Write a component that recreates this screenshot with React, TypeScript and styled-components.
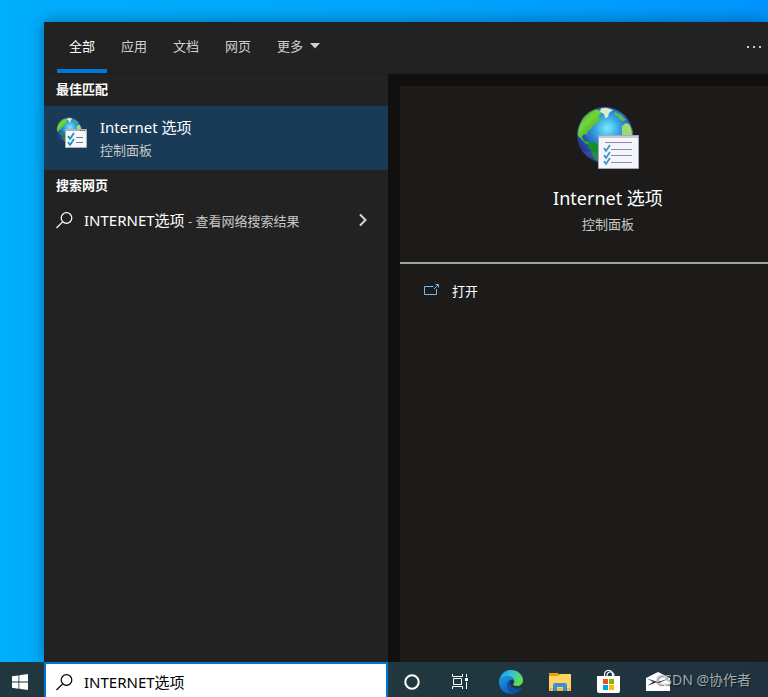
import React from 'react';
import styled, { createGlobalStyle } from 'styled-components';

const GlobalStyle = createGlobalStyle`
  *, *::before, *::after { box-sizing: border-box; }
  body {
    margin: 0;
    font-family: "Noto Sans", "Noto Sans CJK SC", sans-serif;
    font-size: 13px;
    line-height: 20px;
  }
  button, input { font: inherit; color: inherit; }
  button { border: 0; padding: 0; background: none; cursor: default; }
  h2, h3, p { margin: 0; }
  svg { display: block; flex: none; }
`;

const Desktop = styled.div`
  position: relative;
  display: flex;
  flex-direction: column;
  height: 100vh;
  overflow: hidden;
  background: linear-gradient(90deg, #00aefc 0%, #00a6fb 50%, #0094fc 100%);
`;

const SearchPanel = styled.main`
  flex: 1;
  min-height: 0;
  display: flex;
  flex-direction: column;
  margin: 22px 0 0 44px;
  background: #222222;
  color: #ffffff;
  box-shadow: 0 0 14px rgba(0, 20, 50, 0.45);
`;

const Header = styled.header`
  display: flex;
  align-items: center;
  justify-content: space-between;
  height: 52px;
  padding: 0 6px 0 13px;
  border-bottom: 1px solid #1d1d1d;
`;

const Tabs = styled.nav`
  display: flex;
  gap: 2px;
  height: 100%;
`;

const Tab = styled.button<{ $active?: boolean }>`
  display: flex;
  align-items: center;
  gap: 7px;
  padding: 0 12px;
  border-bottom: 4px solid ${(p) => (p.$active ? '#0078d7' : 'transparent')};
  color: ${(p) => (p.$active ? '#ffffff' : '#d0d0d0')};
`;

const MoreButton = styled.button`
  display: flex;
  align-items: center;
  height: 32px;
  margin-bottom: 2px;
`;

const Columns = styled.div`
  flex: 1;
  min-height: 0;
  display: flex;
`;

const Results = styled.section`
  flex: 0 0 344px;
`;

const GroupTitle = styled.h3`
  padding: 5px 12px 7px;
  font-size: 13px;
  font-weight: 700;
`;

const BestMatch = styled.button`
  display: flex;
  align-items: flex-start;
  gap: 12px;
  width: 100%;
  height: 64px;
  padding: 11px 12px;
  background: #193b57;
  text-align: left;
`;

const ResultText = styled.span`
  display: flex;
  flex-direction: column;
  gap: 3px;
`;

const Name = styled.span`
  font-size: 15px;
`;

const Muted = styled.span`
  font-size: 13px;
  color: #c8c8c8;
`;

const WebResult = styled.button`
  display: flex;
  align-items: center;
  width: 100%;
  height: 36px;
  padding: 0 20px 0 12px;
  gap: 11px;
  text-align: left;
`;

const WebResultText = styled.span`
  flex: 1;
`;

const PreviewArea = styled.section`
  flex: 1;
  min-width: 0;
  display: flex;
  padding: 12px 0 0 12px;
  overflow: hidden;
  background: #11100e;
`;

const PreviewCard = styled.div`
  flex: 1 0 416px;
  background: #1c1b19;
`;

const Hero = styled.div`
  display: flex;
  flex-direction: column;
  align-items: center;
  padding: 20px 0 28px;
  border-bottom: 2px solid #a3a3a1;
`;

const HeroTitle = styled.h2`
  margin: 14px 0 2px;
  font-size: 18px;
  font-weight: 400;
  line-height: 28px;
`;

const OpenAction = styled.button`
  display: flex;
  align-items: center;
  gap: 12px;
  width: 100%;
  height: 38px;
  margin-top: 8px;
  padding: 0 24px;
`;

const Taskbar = styled.footer`
  display: flex;
  align-items: center;
  height: 35px;
  background: linear-gradient(90deg, #20373f 0%, #21383f 50%, #20323f 100%);
  color: #ffffff;
`;

const TaskButton = styled.button<{ $width?: number }>`
  flex: none;
  display: flex;
  justify-content: center;
  align-items: center;
  width: ${(p) => p.$width ?? 48}px;
  height: 100%;
  padding-top: 5px;
`;

const PinnedApps = styled.div`
  display: flex;
  gap: 1px;
  height: 100%;
  margin-left: 3px;
`;

const SearchBox = styled.label`
  flex: 0 0 344px;
  display: flex;
  align-items: center;
  gap: 11px;
  height: 100%;
  margin-left: 4px;
  padding: 3px 10px 0;
  border: 2px solid #0078d7;
  border-bottom: 0;
  background: #ffffff;
  color: #000000;
`;

const SearchInput = styled.input`
  flex: 1;
  min-width: 0;
  padding: 0;
  border: 0;
  outline: 0;
  background: none;
  font-size: 15px;
`;

const Watermark = styled.span`
  position: absolute;
  right: 17px;
  bottom: 7px;
  font-size: 14px;
  color: rgba(190, 194, 197, 0.85);
  text-shadow: 1px 1px 1px rgba(0, 0, 0, 0.5);
  pointer-events: none;
`;

const Globe = ({ id }: { id: string }) => (
  <>
    <defs>
      <radialGradient id={`${id}-sea`} cx="54%" cy="38%" r="58%">
        <stop offset="0" stopColor="#7deafc" />
        <stop offset="0.35" stopColor="#38a8e6" />
        <stop offset="0.75" stopColor="#2556b4" />
        <stop offset="1" stopColor="#23358c" />
      </radialGradient>
      <linearGradient id={`${id}-land`} x1="0" y1="0" x2="0.6" y2="1">
        <stop offset="0" stopColor="#2a9e2e" />
        <stop offset="0.45" stopColor="#74d63a" />
        <stop offset="1" stopColor="#1f9c25" />
      </linearGradient>
      <clipPath id={`${id}-clip`}>
        <circle cx="29" cy="29" r="28" />
      </clipPath>
    </defs>
    <circle cx="29" cy="29" r="28" fill={`url(#${id}-sea)`} />
    <g clipPath={`url(#${id}-clip)`}>
      <path
        d="M3 20 7 11 14 5 20 3l4 2 1 3-3 3 3 2-3 4-4 2-3 4-3 2-1 4-3-1-2 3 2 4 5 1 2 3-5-1-5-5-4-4z"
        fill={`url(#${id}-land)`}
      />
      <path d="m13 37 5-1 5 3 3 3v14l-4 1-5-6-2-6-3-4z" fill="#168f28" />
      <path d="m46 20 4-3 3 1 3 5 2 6-1 6-4-2-2 1-5-5z" fill="#a2d970" />
      <path d="m39 6 6 3 5 5-3 1-4-2-1-3-4-1z" fill="#5ec04c" />
      <path d="m25 2 5-1 4 2 3 1-4 3-1 4-3 1-1-4-4-2z" fill="#d8edcc" />
      <path d="M0 43q15 5 30 2v14H0z" fill="#6b78d0" opacity="0.25" />
    </g>
    <circle cx="29" cy="29" r="27.5" fill="none" stroke="#203d73" strokeOpacity="0.7" />
  </>
);

const InternetOptionsLarge = () => (
  <svg width="64" height="64" viewBox="0 0 64 64" aria-hidden="true">
    <Globe id="large" />
    <path d="M22.500 29.500h40v33h-40z" fill="#f5f6fa" stroke="#9eabbd" />
    <path d="M23 31h39" stroke="#c2cad7" strokeWidth="2" />
    <path d="M29 36.500h27M35 43.500h21M35 49.500h21M35 56.500h21" stroke="#8e89aa" />
    <path
      d="m28 42 2 3 4-6m-6 10 2 3 4-6m-6 9 2 3 4-6"
      fill="none"
      stroke="#3b92c8"
      strokeWidth="1.700"
    />
  </svg>
);

const InternetOptionsSmall = () => (
  <svg width="32" height="32" viewBox="0 0 32 32" aria-hidden="true">
    <g transform="scale(0.450)">
      <Globe id="small" />
    </g>
    <path d="M9.500 12.500h21v18h-21z" fill="#f8f8f8" stroke="#a9b1b8" />
    <path d="M10 13.500h20" stroke="#a9b1b8" />
    <path d="M24 13.500h1m1 0h1m1 0h1" stroke="#52606b" />
    <path d="M20 20.500h7M20 25.500h7" stroke="#77749c" />
    <path d="m12 19 2 3 4-6m-6 9 2 3 4-6" fill="none" stroke="#1594bd" strokeWidth="1.800" />
  </svg>
);

const SearchIcon = () => (
  <svg width="17" height="17" viewBox="0 0 17 17" fill="none" stroke="currentColor" aria-hidden="true">
    <circle cx="10.500" cy="6" r="5.300" strokeWidth="1.200" />
    <path d="M6.600 9.800.5 16" strokeWidth="1.200" />
  </svg>
);

const CaretDown = () => (
  <svg width="10" height="6" viewBox="0 0 10 6" aria-hidden="true">
    <path d="M0 0h10L5 5.500z" fill="#d0d0d0" />
  </svg>
);

const Dots = () => (
  <svg width="16" height="4" viewBox="0 0 16 4" aria-hidden="true">
    <path d="M1 1h2v2H1zM7 1h2v2H7zM13 1h2v2h-2z" fill="#cccccc" />
  </svg>
);

const ChevronRight = () => (
  <svg width="10" height="14" viewBox="0 0 10 14" fill="none" aria-hidden="true">
    <path d="m2 1.500 5.500 5.500L2 12.500" stroke="#d6d6d6" strokeWidth="2" />
  </svg>
);

const OpenIcon = () => (
  <svg width="16" height="16" viewBox="0 0 16 16" fill="none" stroke="#76b9ed" aria-hidden="true">
    <path d="M9.500 3.500h-9v8h12V6M10 6l4.500-4.500M11.500 1.500h3v3" />
  </svg>
);

const WindowsIcon = () => (
  <svg width="16" height="16" viewBox="0 0 16 16" fill="#ffffff" aria-hidden="true">
    <path d="M0 2.300 6.500 1.400v6.200H0zM7.300 1.300 16 0v7.600H7.300zM0 8.500h6.500v6.200L0 13.800zM7.300 8.500H16V16l-8.700-1.200z" />
  </svg>
);

const CortanaIcon = () => (
  <svg width="16" height="16" viewBox="0 0 16 16" fill="none" aria-hidden="true">
    <circle cx="8" cy="8" r="6.700" stroke="#ffffff" strokeWidth="2" />
  </svg>
);

const TaskViewIcon = () => (
  <svg width="17" height="16" viewBox="0 0 17 16" fill="none" stroke="#ffffff" aria-hidden="true">
    <path d="M.5 0v2.500h10V0M1.500 4.500h8v6h-8zM.5 15v-2.500h10V15M14.500 0v3M14.500 8v7" />
    <path d="M13 4h3v3h-3z" fill="#ffffff" stroke="none" />
  </svg>
);

const EdgeIcon = () => (
  <svg width="24" height="24" viewBox="0 0 24 24" aria-hidden="true">
    <defs>
      <linearGradient id="edge-top" x1="0" y1="0" x2="1" y2="0.5">
        <stop offset="0" stopColor="#168de0" />
        <stop offset="0.5" stopColor="#35c2d9" />
        <stop offset="1" stopColor="#62dc54" />
      </linearGradient>
      <linearGradient id="edge-left" x1="0" y1="0" x2="0.5" y2="1">
        <stop offset="0" stopColor="#1c9ee6" />
        <stop offset="1" stopColor="#0b61bd" />
      </linearGradient>
    </defs>
    <path
      d="M.2 10.800C.9 4.600 5.900 0 12 0c7 0 12 5 12 10.300 0 3.500-2.800 5.800-6.100 5.800-2.200 0-3.800-.8-3.800-1.500 0-.6 1.200-1 1.200-2.800 0-2.800-2.700-5-6.500-5-4 0-7.300 1.700-8.600 4z"
      fill="url(#edge-top)"
    />
    <path
      d="M0 12c0-4 4.400-6.200 8.500-6.200 4.200 0 6.800 2.600 6.800 5.500-1-1.500-2.300-1.900-3.700-1.300-3.400 1.200-4.200 6.300-1.200 10 1.400 1.800 3.300 3.200 5 3.500-1.100.4-2.400.5-3.400.5C5.400 24 0 18.700 0 12z"
      fill="url(#edge-left)"
    />
    <path
      d="M11 10.300c-2.200.9-3.200 3.200-2.900 6 .4 4 4 7.100 7.300 7.200 3.400-.8 5.700-2.900 7.200-5.200.3-.5-.1-.8-.6-.6-4.900 2.300-11-.2-11-5.400 0-.8.200-1.500.6-2.100z"
      fill="#114f98"
    />
  </svg>
);

const FolderIcon = () => (
  <svg width="22" height="18" viewBox="0 0 22 18" aria-hidden="true">
    <path d="M0 0h9l2 2h11v5H0z" fill="#e6a20e" />
    <path d="M0 3h9l2-2h11v17H0z" fill="#ffd461" />
    <path d="M0 15h22v3H0z" fill="#f5bb36" />
    <path d="M4 18v-6q0-2 2-2h10q2 0 2 2v6h-4v-4H8v4z" fill="#3b8fd6" />
  </svg>
);

const StoreIcon = () => (
  <svg width="24" height="24" viewBox="0 0 24 24" aria-hidden="true">
    <path d="M0 6h23v15q0 2-2 2H2q-2 0-2-2z" fill="#ffffff" />
    <path
      d="M7.500 8V5q0-4.500 4-4.500t4 4.500v3M10 6q0-4 3.500-4T17 6"
      fill="none"
      stroke="#ffffff"
      strokeWidth="1.200"
    />
    <path d="M6 9h5v5H6z" fill="#f25022" />
    <path d="M12 9h5v5h-5z" fill="#7fba00" />
    <path d="M6 15h5v5H6z" fill="#00a4ef" />
    <path d="M12 15h5v5h-5z" fill="#ffb900" />
  </svg>
);

const MailIcon = () => (
  <svg width="24" height="20" viewBox="0 0 24 20" aria-hidden="true">
    <path d="M0 6 12 0l12 6v13H0z" fill="#ffffff" />
    <path d="m1 6.500 11 5L23 6.500 12 10z" fill="#20333e" />
    <path d="m1 6.500 9 4-9 3.500 6-4z" fill="#20333e" />
  </svg>
);

const filters = ['应用', '文档', '网页'];

export default function App() {
  return (
    <>
      <GlobalStyle />
      <Desktop>
        <SearchPanel>
          <Header>
            <Tabs>
              <Tab $active>全部</Tab>
              {filters.map((label) => (
                <Tab key={label}>{label}</Tab>
              ))}
              <Tab>
                更多
                <CaretDown />
              </Tab>
            </Tabs>
            <MoreButton aria-label="选项">
              <Dots />
            </MoreButton>
          </Header>
          <Columns>
            <Results>
              <GroupTitle>最佳匹配</GroupTitle>
              <BestMatch>
                <InternetOptionsSmall />
                <ResultText>
                  <Name>Internet 选项</Name>
                  <Muted>控制面板</Muted>
                </ResultText>
              </BestMatch>
              <GroupTitle>搜索网页</GroupTitle>
              <WebResult>
                <SearchIcon />
                <WebResultText>
                  <Name>INTERNET选项</Name>
                  <Muted> - 查看网络搜索结果</Muted>
                </WebResultText>
                <ChevronRight />
              </WebResult>
            </Results>
            <PreviewArea>
              <PreviewCard>
                <Hero>
                  <InternetOptionsLarge />
                  <HeroTitle>Internet 选项</HeroTitle>
                  <Muted>控制面板</Muted>
                </Hero>
                <OpenAction>
                  <OpenIcon />
                  打开
                </OpenAction>
              </PreviewCard>
            </PreviewArea>
          </Columns>
        </SearchPanel>
        <Taskbar>
          <TaskButton $width={40} aria-label="开始">
            <WindowsIcon />
          </TaskButton>
          <SearchBox>
            <SearchIcon />
            <SearchInput aria-label="搜索" defaultValue="INTERNET选项" />
          </SearchBox>
          <TaskButton aria-label="Cortana">
            <CortanaIcon />
          </TaskButton>
          <TaskButton aria-label="任务视图">
            <TaskViewIcon />
          </TaskButton>
          <PinnedApps>
            <TaskButton aria-label="Edge">
              <EdgeIcon />
            </TaskButton>
            <TaskButton aria-label="文件资源管理器">
              <FolderIcon />
            </TaskButton>
            <TaskButton aria-label="Store">
              <StoreIcon />
            </TaskButton>
            <TaskButton aria-label="邮件">
              <MailIcon />
            </TaskButton>
          </PinnedApps>
        </Taskbar>
        <Watermark>CSDN @协作者</Watermark>
      </Desktop>
    </>
  );
}
